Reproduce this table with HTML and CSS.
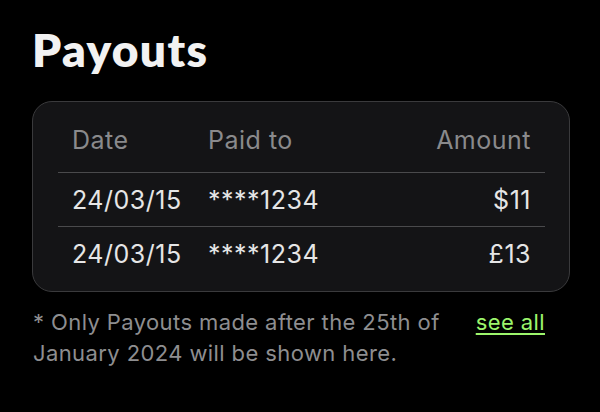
FILE: index.html
```html
<!DOCTYPE html>
<html lang="en">
<head>
<meta charset="utf-8">
<link rel="stylesheet" href="styles.css">
</head>
<body>
<main class="page">
  <h1 class="title">Payouts</h1>
  <section class="card">
    <table class="payouts">
      <colgroup><col class="col-date"><col class="col-to"><col class="col-amt"></colgroup>
      <thead>
        <tr><th class="c-date">Date</th><th class="c-to">Paid to</th><th class="c-amt">Amount</th></tr>
      </thead>
      <tbody>
        <tr><td class="c-date">24/03/15</td><td class="c-to">****1234</td><td class="c-amt">$11</td></tr>
        <tr><td class="c-date">24/03/15</td><td class="c-to">****1234</td><td class="c-amt">£13</td></tr>
      </tbody>
    </table>
  </section>
  <footer class="note">
    <p class="note-text">* Only Payouts made after the 25th of January 2024 will be shown here.</p>
    <a class="see-all" href="#">see all</a>
  </footer>
</main>
</body>
</html>
```

FILE: styles.css
```css
html, body {
  margin: 0;
  padding: 0;
  background: #000;
}
body {
  width: 600px;
  height: 412px;
  overflow: hidden;
  font-family: Inter, "Noto Sans", sans-serif;
  color: #e8e8e8;
}
.page {
  padding: 24px 30px 0 32px;
}
.title {
  margin: 0;
  font-family: Lato, Inter, sans-serif;
  font-weight: 800;
  font-size: 46px;
  line-height: 52px;
  color: #f2f2f2;
  letter-spacing: 1.4px;
}
.card {
  margin-top: 25px;
  width: 538px;
  box-sizing: border-box;
  background: #141416;
  border: 1px solid #3a3a3c;
  border-radius: 20px;
  padding: 0 24px 11px 25px;
}
.payouts {
  width: 100%;
  table-layout: fixed;
  border-collapse: collapse;
  font-size: 25px;
  letter-spacing: 0.5px;
}
.col-date { width: 136px; }
.col-amt { width: 150px; }
.payouts th {
  font-weight: 400;
  color: #8a8a8c;
  height: 64px;
  padding: 6px 14px 0;
  text-align: left;
  border-bottom: 1.5px solid #4a4a4c;
}
.payouts td {
  height: 53px;
  padding: 0 14px;
  color: #e6e6e6;
  white-space: nowrap;
}
.payouts tbody tr:first-child td {
  border-bottom: 1.5px solid #4a4a4c;
}
.payouts .c-date { padding-right: 0; }
.payouts th.c-amt, .payouts td.c-amt { text-align: right; }
.note {
  display: flex;
  justify-content: space-between;
  align-items: flex-start;
  margin: 15px 0 0 1px;
  width: 512px;
}
.note-text {
  margin: 0;
  width: 420px;
  font-size: 22px;
  line-height: 31px;
  letter-spacing: 0.4px;
  color: #8e8e90;
}
.see-all {
  font-size: 22px;
  line-height: 31px;
  letter-spacing: 0.4px;
  color: #9cf56c;
  text-decoration: underline;
  text-decoration-thickness: 1.5px;
  text-underline-offset: 3px;
}
```
